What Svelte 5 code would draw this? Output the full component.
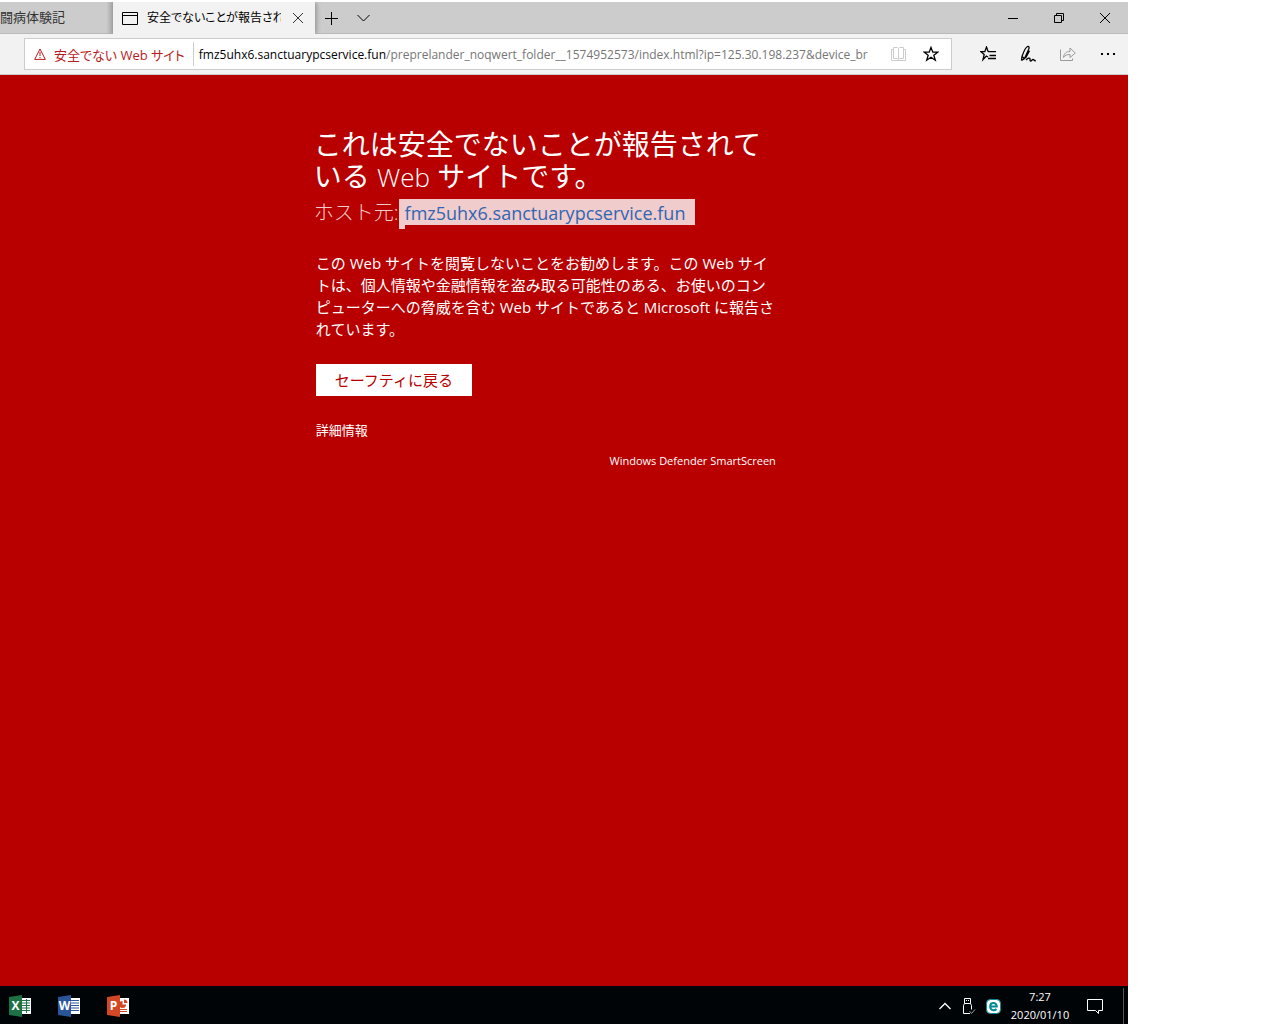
<script lang="ts">
	let address = $state('/preprelander_noqwert_folder__1574952573/index.html?ip=125.30.198.237&device_br');

	const host = 'fmz5uhx6.sanctuarypcservice.fun';
	const officeApps = [
		{ name: 'Excel', letter: 'X', color: '#1e7145' },
		{ name: 'Word', letter: 'W', color: '#2a5699' },
		{ name: 'PowerPoint', letter: 'P', color: '#d24726' }
	];
</script>

<div class="desktop">
	<header class="titlebar">
		<div class="tabs" role="tablist">
			<button class="tab" role="tab" aria-selected="false">闘病体験記</button>
			<div class="tab active">
				<button class="tab-label" role="tab" aria-selected="true">
					<svg width="16" height="13" viewBox="0 0 16 13"><path d="M.5 .5h15v12H.5zM.5 3.5h15" /></svg>
					<span>安全でないことが報告されて</span>
				</button>
				<button class="tab-close" aria-label="タブを閉じる">
					<svg width="10" height="10" viewBox="0 0 10 10"><path d="M0 0l10 10M10 0L0 10" /></svg>
				</button>
			</div>
			<button class="tab-tool" aria-label="新しいタブ">
				<svg width="13" height="13" viewBox="0 0 13 13"><path d="M0 6.5h13M6.5 0v13" /></svg>
			</button>
			<button class="tab-tool" aria-label="タブ プレビュー">
				<svg width="13" height="8" viewBox="0 0 13 8"><path d="M.5 1l6 6 6-6" /></svg>
			</button>
		</div>
		<div class="window-controls">
			<button aria-label="最小化">
				<svg width="10" height="10" viewBox="0 0 10 10"><path d="M0 5.5h10" /></svg>
			</button>
			<button aria-label="元に戻す">
				<svg width="10" height="10" viewBox="0 0 10 10"><path d="M.5 2.5h7v7h-7zM2.5 2.5v-2h7v7h-2" /></svg>
			</button>
			<button aria-label="閉じる">
				<svg width="10" height="10" viewBox="0 0 10 10"><path d="M0 0l10 10M10 0L0 10" /></svg>
			</button>
		</div>
	</header>

	<div class="toolbar">
		<div class="address">
			<button class="unsafe">
				<svg width="12" height="12" viewBox="0 0 12 12"><path d="M6 1L11.3 11.4H.7zM6 4v4M6 9v1.2" /></svg>
				<span>安全でない Web サイト</span>
			</button>
			<label class="host" for="address">{host}</label>
			<input id="address" type="text" bind:value={address} spellcheck="false" />
			<button class="icon reading" aria-label="読み取りビュー">
				<svg width="15" height="14" viewBox="0 0 15 14">
					<path d="M2.5 .5h4l1 1 1-1h4v11h-4l-1 1-1-1h-4zM7.5 1.5v11M2.5 2.5h-2v11h14v-11h-2" />
				</svg>
			</button>
			<button class="icon" aria-label="お気に入りに追加">
				<svg width="16" height="16" viewBox="0 0 16 16">
					<path class="bold" d="M8 1.4l1.8 4.8h4.9l-3.9 3.1 1.5 4.9L8 11.3l-4.3 2.9 1.5-4.9L1.3 6.2h4.9z" />
				</svg>
			</button>
		</div>
		<nav class="actions">
			<button class="icon" aria-label="ハブ">
				<svg width="16" height="16" viewBox="0 0 16 16">
					<path class="bold" d="M8 11l-1.600-1-3.400 3.500 1.200-5L.9 5.700h3.900L6.500 1l1.700 4.700H16M9.500 9.500H16M8 12.500h8" />
				</svg>
			</button>
			<button class="icon" aria-label="ノートの追加">
				<svg width="16" height="18" viewBox="0 0 16 18">
					<path class="bold" d="M1.500 15.500L2 11.500C3.500 7 5.500 2.500 7.500 1.500c1.500-.6 2 .8 1.200 2.700L4.500 13.500 1.500 15.500M2 11.500l2.500 2M5.500 13.200l4-7.500M6 15c2-1.800 3.500-2.500 4-1.200.3 1-.6 2 .5 2.200 1.200.2 1.600-1.800 2.700-1.500.9.200.8 1.500 2.600 1.200" />
				</svg>
			</button>
			<button class="icon share" aria-label="共有">
				<svg width="16" height="16" viewBox="0 0 16 16">
					<path d="M.5 3.500v11h12v-2M3.500 11.500c.5-4.500 3-6 6.500-6V2l5.300 5L10 11.500V8.500c-3 0-5 .6-6.500 3z" />
				</svg>
			</button>
			<button class="icon" aria-label="設定など">
				<svg width="16" height="4" viewBox="0 0 16 4">
					<path class="solid" d="M1 1h2v2H1zM7 1h2v2H7zM13 1h2v2h-2z" />
				</svg>
			</button>
		</nav>
	</div>

	<main>
		<section class="warning">
			<div class="heading">
				<h1>これは安全でないことが報告されて<br />いる <span class="latin">Web</span> サイトです。</h1>
				<p class="hosted">ホスト元:<a href="#host">{host}</a></p>
			</div>
			<p class="detail">
				この Web サイトを閲覧しないことをお勧めします。この Web サイ<br />
				トは、個人情報や金融情報を盗み取る可能性のある、お使いのコン<br />
				ピューターへの脅威を含む Web サイトであると Microsoft に報告さ<br />
				れています。
			</p>
			<button class="back">セーフティに戻る</button>
			<a class="more" href="#more">詳細情報</a>
			<p class="brand">Windows Defender SmartScreen</p>
		</section>
	</main>

	<footer class="taskbar">
		<div class="apps">
			{#each officeApps as app (app.name)}
				<button aria-label={app.name} style:--app-color={app.color}>
					<span class="cover">{app.letter}</span>
					<svg width="9" height="18" viewBox="0 0 9 18">
						<path class="sheet" d="M0 1h9v16H0z" />
						{#if app.name === 'Excel'}
							<path class="ink" d="M0 3.500h8M0 6h8M0 8.500h8M0 11h8M0 13.500h8M4.500 2v14" />
						{:else if app.name === 'Word'}
							<path class="ink" d="M0 3.500h8M0 6h8M0 8.500h8M0 11h8M0 13.500h8" />
						{:else}
							<path class="pie" d="M2.500 4v3.500H6A3.500 3.500 0 1 1 2.500 4zM4 2.500A3.500 3.500 0 0 1 7.500 6H4z" />
							<path class="ink" d="M0 12.500h7M0 14.500h7" />
						{/if}
					</svg>
				</button>
			{/each}
		</div>
		<div class="tray">
			<button aria-label="隠れているインジケーターを表示します">
				<svg class="bold" width="12" height="8" viewBox="0 0 12 8"><path d="M.5 7L6 1.500 11.500 7" /></svg>
			</button>
			<button aria-label="ハードウェアの安全な取り外し">
				<svg width="14" height="17" viewBox="0 0 14 17">
					<path d="M2.500 5.500v-5h6v5M4 2.500h1M6 2.500h1M8 15.500H1.500v-8l1-2h6l1 2v4" />
					<path class="check" d="M7.500 13l2 2.500L13 11.500" />
				</svg>
			</button>
			<button aria-label="ESET">
				<svg width="15" height="15" viewBox="0 0 15 15">
					<rect class="eset" x=".5" y=".5" width="14" height="14" rx="4" />
					<path class="eset-e" d="M4.200 7.500h6.600C10.800 2.900 4.200 2.900 4.200 7.500c0 4.300 4.500 4.500 6.300 2.500" />
				</svg>
			</button>
			<button class="clock"><span>7:27</span><span>2020/01/10</span></button>
			<button class="notices" aria-label="アクション センター">
				<svg width="17" height="17" viewBox="0 0 17 17"><path d="M.5 1.500h15v11h-4v3l-3-3h-8z" /></svg>
			</button>
			<button class="show-desktop" aria-label="デスクトップの表示"></button>
		</div>
	</footer>
</div>

<style>
	:global(body) {
		margin: 0;
		background: #fff;
	}

	.desktop {
		display: flex;
		flex-direction: column;
		min-height: 100vh;
		box-sizing: border-box;
		padding: 2px 152px 0 0;
		font-family: 'Open Sans', 'Noto Sans CJK JP', sans-serif;
		font-size: 13px;
		color: #000;
	}

	button,
	input {
		margin: 0;
		padding: 0;
		border: 0;
		background: none;
		font: inherit;
		color: inherit;
	}

	button {
		display: flex;
		align-items: center;
		justify-content: center;
		white-space: nowrap;
	}

	svg {
		flex: none;
		fill: none;
		stroke: currentColor;
	}

	.bold {
		stroke-width: 1.3;
	}

	.solid {
		fill: currentColor;
		stroke: none;
	}

	.titlebar {
		display: flex;
		justify-content: space-between;
		height: 32px;
		background: #ccc;
		box-shadow: inset 0 -1px #bababa;
	}

	.tabs {
		display: flex;
		overflow: hidden;
	}

	.tab {
		width: 113px;
		justify-content: flex-start;
		padding-bottom: 3px;
		box-sizing: border-box;
		color: #333;
		background: linear-gradient(to right, transparent 94%, #aaa);
	}

	.tab.active {
		display: flex;
		width: 202px;
		padding-bottom: 0;
		color: #000;
		background: #f2f2f2;
		box-shadow: 1px 0 5px #888;
	}

	.tab-label {
		flex: 1;
		min-width: 0;
		justify-content: flex-start;
		gap: 9px;
		padding-left: 9px;
		font-size: 12px;
		font-feature-settings: 'palt';
	}

	.tab-label span {
		overflow: hidden;
		padding-bottom: 2px;
	}

	.tab-close {
		width: 34px;
		color: #333;
	}

	.tab-tool {
		width: 32px;
	}

	.window-controls {
		display: flex;
	}

	.window-controls button {
		width: 46px;
	}

	.toolbar {
		display: flex;
		align-items: center;
		height: 40px;
		padding-left: 24px;
		background: #f2f2f2;
		border-bottom: 1px solid #ccc;
	}

	.address {
		display: flex;
		flex: 1;
		align-items: center;
		min-width: 0;
		height: 30px;
		border: 1px solid #ccc;
		background: #fff;
		font-size: 12px;
	}

	.unsafe {
		gap: 8px;
		height: 24px;
		padding: 0 8px 0 9px;
		border-right: 1px solid #ccc;
		color: #b71c1c;
		font-size: 13px;
		font-feature-settings: 'palt';
	}

	.host {
		margin-left: 5px;
	}

	.address input {
		flex: 1;
		min-width: 0;
		color: #767676;
		outline: none;
	}

	.address .icon {
		width: 32px;
		height: 30px;
	}

	.address .icon:last-child {
		margin-right: 4px;
	}

	.address .reading {
		width: 34px;
		color: #ccc;
	}

	.actions {
		display: flex;
		padding-left: 16px;
	}

	.actions .icon {
		width: 40px;
		height: 32px;
	}

	.actions .share {
		color: #999;
	}

	main {
		flex: 1;
		background: #b80000;
		color: #fff;
	}

	.warning {
		width: 460px;
		margin-left: 28%;
		padding-top: 53px;
	}

	.heading {
		margin-left: -2px;
	}

	h1 {
		margin: 0;
		font-size: 28px;
		font-weight: 400;
		line-height: 32px;
		white-space: nowrap;
	}

	.latin {
		font-size: 26px;
		font-weight: 300;
	}

	.hosted {
		display: flex;
		margin: 6px 0 0;
		font-size: 20px;
		font-weight: 300;
		line-height: 28px;
		color: #f1cccc;
		white-space: nowrap;
	}

	.hosted a {
		display: flex;
		height: 26px;
		padding-right: 10px;
		background: #f1cccc;
		color: #2f66b3;
		font-size: 18px;
		font-weight: 400;
		text-decoration: none;
	}

	/* the selected space before the host is taller than the host itself */
	.hosted a::before {
		content: '';
		width: 6px;
		height: 30px;
		background: #f1cccc;
	}

	.detail {
		margin: 25px 0 0;
		font-size: 15px;
		line-height: 22px;
		white-space: nowrap;
	}

	.back {
		width: 156px;
		height: 32px;
		margin-top: 24px;
		padding-bottom: 2px;
		background: #fff;
		color: #b80000;
		font-size: 15px;
	}

	.more {
		display: block;
		width: fit-content;
		margin-top: 24px;
		line-height: 20px;
		color: #fff;
		text-decoration: none;
	}

	.brand {
		margin: 12px 0 0;
		font-size: 11px;
		line-height: 18px;
		text-align: right;
	}

	.taskbar {
		display: flex;
		justify-content: space-between;
		height: 38px;
		background: #010407;
		color: #fff;
	}

	.apps {
		display: flex;
		padding: 2px 0 0 9px;
		gap: 27px;
	}

	.apps button {
		width: 22px;
	}

	.cover {
		width: 13px;
		height: 22px;
		background: var(--app-color);
		clip-path: polygon(0 9%, 100% 0, 100% 100%, 0 91%);
		font-size: 12px;
		font-weight: 700;
		line-height: 22px;
	}

	.sheet {
		fill: #fff;
		stroke: none;
	}

	.ink {
		stroke: var(--app-color);
	}

	.pie {
		fill: var(--app-color);
		stroke: none;
	}

	.tray {
		display: flex;
		padding-top: 2px;
	}

	.tray button {
		width: 24px;
	}

	.check {
		stroke: #999;
	}

	.eset {
		fill: #fff;
		stroke: #008b94;
	}

	.eset-e {
		stroke: #008b94;
		stroke-width: 2;
	}

	.tray .clock {
		flex-direction: column;
		width: 70px;
		font-size: 11px;
		line-height: 18px;
	}

	.tray .notices {
		width: 40px;
	}

	.tray .show-desktop {
		width: 5px;
		margin-left: 8px;
		border-left: 1px solid #555;
	}
</style>
